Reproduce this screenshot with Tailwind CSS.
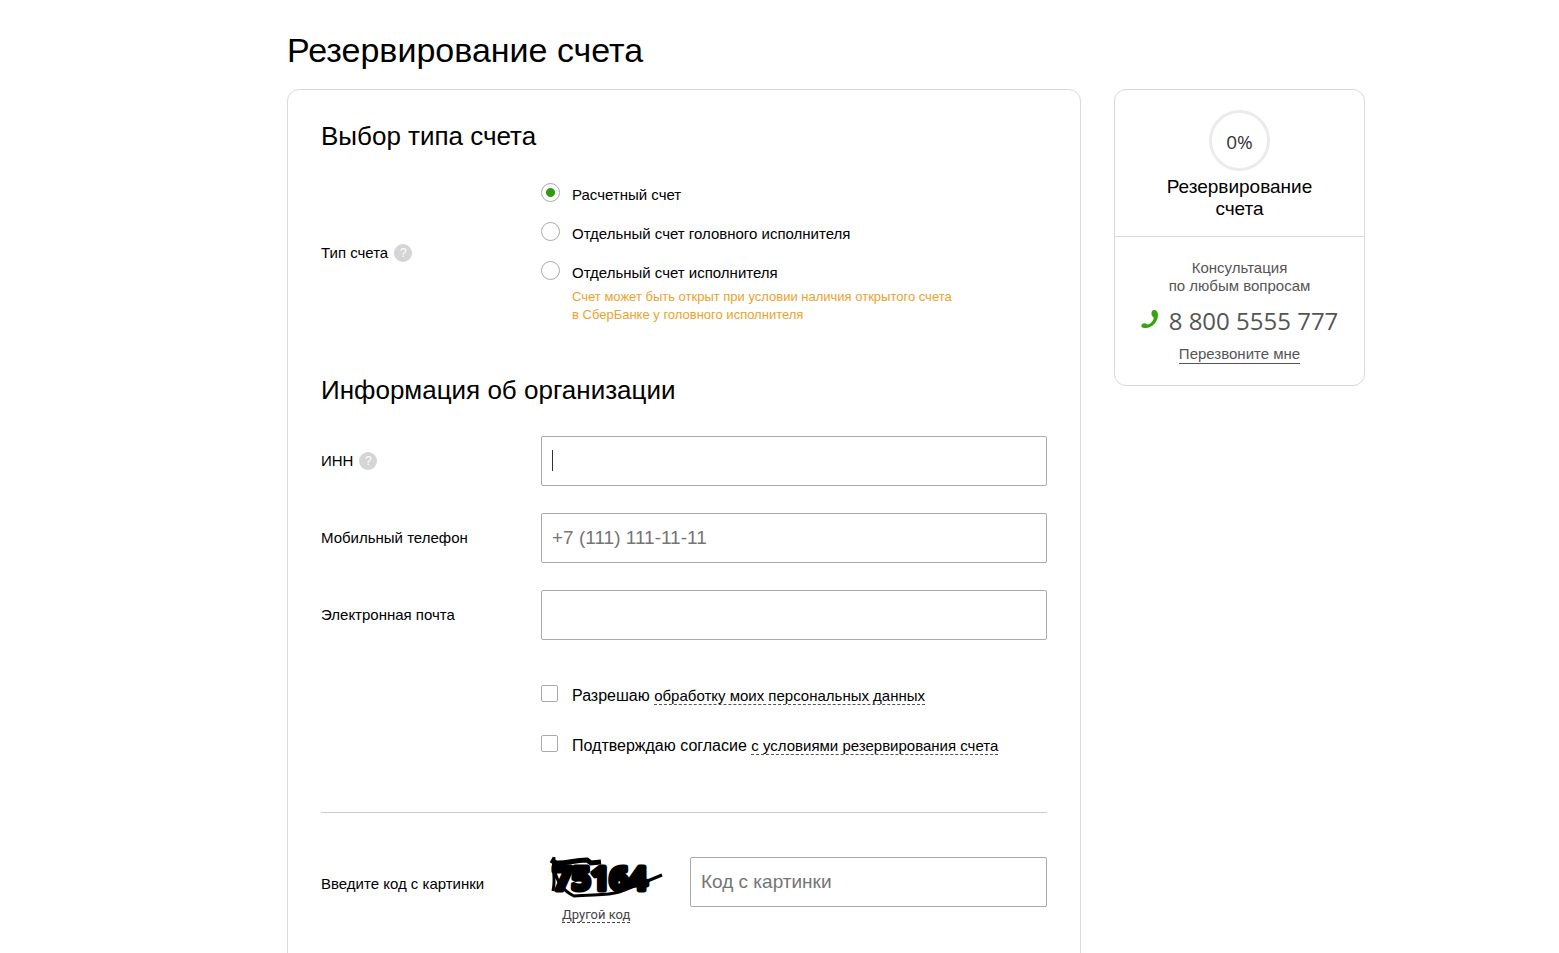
<!DOCTYPE html>
<html lang="ru">
<head>
  <meta charset="UTF-8" />
  <meta name="viewport" content="width=device-width, initial-scale=1.0"/>
  <title>Резервирование счета</title>
  <script src="https://cdn.jsdelivr.net/npm/@tailwindcss/browser@4"></script>
</head>
<body class="bg-white text-black font-['Liberation_Sans',Arial,sans-serif] text-[15px] leading-[18px] overflow-y-hidden">
  <div class="pl-[287px] pr-[194px] pt-[30px]">
    <h1 class="text-[34px] leading-10 mb-[19px]">Резервирование счета</h1>

    <div class="flex items-start gap-[33px]">
      <!-- Form -->
      <form class="flex-1 min-w-0 border border-[#d9d9d9] rounded-xl px-[33px] pt-[30px] pb-16" onsubmit="return false">
        <h2 class="text-[26px] leading-8">Выбор типа счета</h2>

        <fieldset class="mt-[29px] flex items-center">
          <div class="w-[220px] shrink-0 flex items-center gap-1.5">
            <span>Тип счета</span>
            <button type="button" aria-label="Подсказка" class="size-[18px] rounded-full bg-[#d5d5d5] text-white text-xs leading-[18px] text-center">?</button>
          </div>
          <div class="flex-1 flex flex-col gap-3">
            <div class="flex items-start gap-3">
              <input type="radio" name="type" id="type1" checked class="appearance-none mt-0.5 size-[19px] shrink-0 rounded-full border border-[#aaa] bg-white checked:bg-[radial-gradient(circle,#2d9c0f_4px,white_5px)]" />
              <label for="type1" class="leading-[27px]">Расчетный счет</label>
            </div>
            <div class="flex items-start gap-3">
              <input type="radio" name="type" id="type2" class="appearance-none mt-0.5 size-[19px] shrink-0 rounded-full border border-[#aaa] bg-white checked:bg-[radial-gradient(circle,#2d9c0f_4px,white_5px)]" />
              <label for="type2" class="leading-[27px]">Отдельный счет головного исполнителя</label>
            </div>
            <div class="flex items-start gap-3">
              <input type="radio" name="type" id="type3" class="appearance-none mt-0.5 size-[19px] shrink-0 rounded-full border border-[#aaa] bg-white checked:bg-[radial-gradient(circle,#2d9c0f_4px,white_5px)]" />
              <div>
                <label for="type3" class="block leading-[27px]">Отдельный счет исполнителя</label>
                <p class="mt-0.5 text-[13px] text-[#eba22c]">Счет может быть открыт при условии наличия открытого счета<br />в СберБанке у головного исполнителя</p>
              </div>
            </div>
          </div>
        </fieldset>

        <h2 class="mt-[50px] text-[26px] leading-8">Информация об организации</h2>

        <div class="mt-[30px] flex flex-col gap-[27px]">
          <div class="flex items-center">
            <div class="w-[220px] shrink-0 flex items-center gap-1.5">
              <label for="inn">ИНН</label>
              <button type="button" aria-label="Подсказка" class="size-[18px] rounded-full bg-[#d5d5d5] text-white text-xs leading-[18px] text-center">?</button>
            </div>
            <div class="relative flex-1">
              <input type="text" id="inn" class="block w-full h-[50px] px-2.5 text-[19px] border border-[#aaa] rounded-xs outline-none caret-transparent" />
              <span class="absolute left-[11px] top-3.5 w-px h-[21px] bg-[#333]"></span>
            </div>
          </div>
          <div class="flex items-center">
            <label for="phone" class="w-[220px] shrink-0">Мобильный телефон</label>
            <input type="tel" id="phone" placeholder="+7 (111) 111-11-11" class="flex-1 h-[50px] px-2.5 text-[19px] border border-[#aaa] rounded-xs placeholder:text-[#757575]" />
          </div>
          <div class="flex items-center">
            <label for="email" class="w-[220px] shrink-0">Электронная почта</label>
            <input type="email" id="email" class="flex-1 h-[50px] px-2.5 text-[19px] border border-[#aaa] rounded-xs" />
          </div>
        </div>

        <div class="mt-11 pl-[220px] flex flex-col gap-[26px]">
          <div class="flex items-start gap-3.5">
            <input type="checkbox" id="agree1" class="appearance-none mt-px size-[17px] shrink-0 border border-[#aaa] rounded-xs checked:bg-[#2d9c0f]" />
            <label for="agree1" class="text-base leading-6">Разрешаю <a href="#" class="text-[15px] leading-4 inline-block border-b border-dashed border-[#555]">обработку моих персональных данных</a></label>
          </div>
          <div class="flex items-start gap-3.5">
            <input type="checkbox" id="agree2" class="appearance-none mt-px size-[17px] shrink-0 border border-[#aaa] rounded-xs checked:bg-[#2d9c0f]" />
            <label for="agree2" class="text-base leading-6">Подтверждаю согласие <a href="#" class="text-[15px] leading-4 inline-block border-b border-dashed border-[#555]">с условиями резервирования счета</a></label>
          </div>
        </div>

        <hr class="mt-[54px] border-[#ccc]" />

        <!-- Captcha -->
        <div class="mt-[42px] flex items-start">
          <label for="code" class="w-[220px] shrink-0 mt-5">Введите код с картинки</label>
          <div class="w-[149px] shrink-0">
            <svg class="block w-[124px] h-11 overflow-visible" viewBox="0 0 124 44" role="img" aria-label="75164">
              <text x="12" y="35" font-family="Open Sans, sans-serif" font-weight="700" font-size="33" stroke="#000" stroke-width="5" stroke-linejoin="round">75164</text>
              <path d="M10 5L15 8C26 9 32 5 46 5L50 8L60 7" fill="none" stroke="#000" stroke-width="5" />
              <path d="M13 2C11 17 15 22 12 36M13 12C15 25 20 35 33 41C50 39 66 41 78 37L104 27L121 20" fill="none" stroke="#000" stroke-width="3" />
            </svg>
            <div class="pl-[21px] mt-1.5">
              <a href="#" class="inline-block font-[Roboto,sans-serif] text-[13px] leading-[15px] text-[#444] border-b border-dashed border-[#444]">Другой код</a>
            </div>
          </div>
          <input type="text" id="code" placeholder="Код с картинки" class="flex-1 min-w-0 mt-0.5 h-[50px] px-2.5 text-[19px] border border-[#aaa] rounded-xs placeholder:text-[#757575]" />
        </div>
      </form>

      <!-- Sidebar -->
      <aside class="w-[251px] shrink-0 border border-[#d9d9d9] rounded-xl text-center">
        <div class="pt-5 pb-4 border-b border-[#d9d9d9]">
          <div class="mx-auto size-[61px] rounded-full border-3 border-[#ebebeb] font-['Open_Sans',sans-serif] text-[19px] leading-[58px] text-[#333]">0%</div>
          <p class="mt-[5px] text-[19px] leading-[22px]">Резервирование<br />счета</p>
        </div>
        <div class="pt-[22px] pb-[21px] text-[#555]">
          <p>Консультация<br />по любым вопросам</p>
          <div class="mt-2.5 flex justify-center items-start gap-2.5 font-['Open_Sans',sans-serif] text-2xl leading-8">
            <svg class="mt-[5px] size-[18px]" viewBox="0 0 18 18" fill="#38a30f">
              <path d="M12 .2C14.500 -.8 17 1.500 17 5C17 11 12 18 4.500 18C2 18 .3 17.500 .4 15.500C.6 13.300 4 12.600 5.500 13.700L6.500 14.500C9.500 14 12.800 10.500 12.700 7.500L11.500 6.500C10 5 10.200 1.200 12 .2Z" />
            </svg>
            <span>8 800 5555 777</span>
          </div>
          <a href="#" class="mt-2 inline-block leading-[18px] border-b border-[#555]">Перезвоните мне</a>
        </div>
      </aside>
    </div>
  </div>
</body>
</html>
